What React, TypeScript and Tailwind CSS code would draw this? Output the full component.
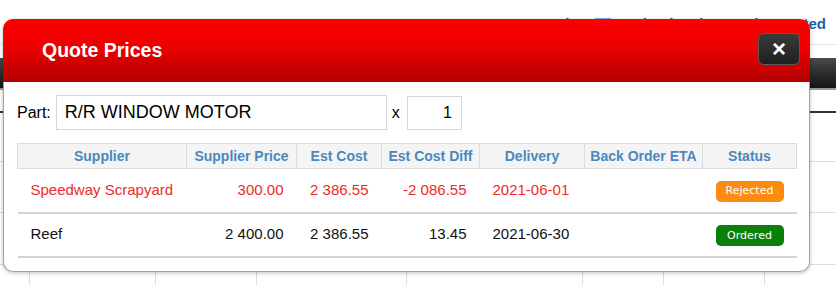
import React from 'react';

type Row = {
  supplier: string;
  price: string;
  est: string;
  diff: string;
  delivery: string;
  eta: string;
  status: 'Rejected' | 'Ordered';
};

const rows: Row[] = [
  {
    supplier: 'Speedway Scrapyard',
    price: '300.00',
    est: '2 386.55',
    diff: '-2 086.55',
    delivery: '2021-06-01',
    eta: '',
    status: 'Rejected',
  },
  {
    supplier: 'Reef',
    price: '2 400.00',
    est: '2 386.55',
    diff: '13.45',
    delivery: '2021-06-30',
    eta: '',
    status: 'Ordered',
  },
];

const headers = [
  { label: 'Supplier', w: 'w-[169px]' },
  { label: 'Supplier Price', w: 'w-[110px]' },
  { label: 'Est Cost', w: 'w-[85px]' },
  { label: 'Est Cost Diff', w: 'w-[98px]' },
  { label: 'Delivery', w: 'w-[105px]' },
  { label: 'Back Order ETA', w: 'w-[118px]' },
  { label: 'Status', w: 'w-[94px]' },
];

function StatusBadge({ status }: { status: Row['status'] }) {
  const color = status === 'Rejected' ? 'bg-[#fb8c0f]' : 'bg-[#0a800a]';
  return (
    <span
      className={`inline-flex h-[21px] w-[68px] items-center justify-center rounded-[5px] text-[11px] text-white ${color}`}
      style={{ fontFamily: '"DejaVu Sans", Verdana, sans-serif' }}
    >
      {status}
    </span>
  );
}

// page that sits behind the modal, mostly hidden
function BackgroundPage() {
  return (
    <div className="flex h-full w-full flex-col">
      <div className="h-[14px]" />
      <div className="flex h-[20px] items-center justify-end gap-3 pr-[10px] text-[15px] font-bold text-[#1f5fa6]">
        <span>Manage quotes</span>
        <span>the</span>
        <span className="h-[12px] w-[16px] bg-[#7db5e8]" />
        <span>Upload a photo to be quoted</span>
      </div>
      <div className="mt-[10px] h-px w-full bg-[#dfe6ee]" />
      <div className="mt-[13px] h-[30px] w-full bg-gradient-to-b from-[#4a4a4a] to-[#151515]" />
      <div className="h-[2px] w-full bg-[#9a9a9a]" />
      <div className="mt-[21px] h-[2px] w-full bg-[#333]" />
      <div className="mt-[48px] h-px w-full bg-[#dcdcdc]" />
      <div className="mt-[50px] h-px w-full bg-[#dcdcdc]" />
      <div className="mt-[51px] h-px w-full bg-[#dcdcdc]" />
      <div className="flex h-[20px] w-full">
        <div className="w-[30px] border-r border-[#dcdcdc]" />
        <div className="w-[126px] border-r border-[#dcdcdc]" />
        <div className="w-[101px] border-r border-[#dcdcdc]" />
        <div className="w-[150px] border-r border-[#dcdcdc]" />
        <div className="w-[176px] border-r border-[#dcdcdc]" />
        <div className="w-[81px] border-r border-[#dcdcdc]" />
        <div className="w-[101px] border-r border-[#dcdcdc]" />
      </div>
    </div>
  );
}

export default function App() {
  return (
    <div
      className="relative h-[302px] w-[836px] overflow-hidden bg-white"
      style={{ fontFamily: '"Liberation Sans", Arial, sans-serif' }}
    >
      <BackgroundPage />

      <div className="absolute left-[3px] top-[19px] w-[807px] rounded-[10px] shadow-[0_1px_4px_rgba(0,0,0,0.25)]">
        <div className="flex h-[63px] items-center justify-between rounded-t-[10px] bg-gradient-to-b from-[#ff0000] via-[#e80000] to-[#b20000] pl-[39px] pr-[10px]">
          <h2 className="text-[19.5px] font-bold text-white">Quote Prices</h2>
          <button className="mb-[4px] flex h-[32px] w-[42px] items-center justify-center rounded-[6px] border border-[#5a5a5a] bg-gradient-to-b from-[#3a3a3a] to-[#1f1f1f] text-[24px] font-bold leading-none text-white">
            ×
          </button>
        </div>

        <div className="rounded-b-[10px] border border-t-0 border-[#a0a0a0] bg-white px-[13px] pb-[13px] pt-[13px]">
          <div className="flex items-center">
            <label className="text-[16px] text-black">Part:</label>
            <input
              className="ml-[5px] h-[35px] w-[331px] border border-[#d6d6d6] px-[8px] text-[18px] text-black outline-none"
              defaultValue="R/R WINDOW MOTOR"
            />
            <span className="ml-[5px] text-[16px] text-black">x</span>
            <input
              className="ml-[7px] h-[34px] w-[55px] border border-[#d6d6d6] px-[9px] text-right text-[16px] text-black outline-none"
              defaultValue="1"
            />
          </div>

          <table className="mt-[13px] w-[779px] table-fixed border-collapse">
            <thead>
              <tr className="h-[25px] bg-[#f4f4f4]">
                {headers.map((h) => (
                  <th
                    key={h.label}
                    className={`${h.w} border border-[#dcdcdc] p-0 text-center text-[14px] font-bold text-[#4a88bf]`}
                  >
                    {h.label}
                  </th>
                ))}
              </tr>
            </thead>
            <tbody>
              {rows.map((r) => {
                const tone = r.status === 'Rejected' ? 'text-[#ee2a2a]' : 'text-[#111]';
                return (
                  <tr key={r.supplier} className={`h-[44px] border-b-2 border-[#d4d4d4] text-[15px] ${tone}`}>
                    <td className="pl-[13px] text-left">{r.supplier}</td>
                    <td className="pr-[13px] text-right">{r.price}</td>
                    <td className="pr-[13px] text-right">{r.est}</td>
                    <td className="pr-[13px] text-right">{r.diff}</td>
                    <td className="pl-[13px] text-left">{r.delivery}</td>
                    <td className="text-center">{r.eta}</td>
                    <td className="text-center">
                      <StatusBadge status={r.status} />
                    </td>
                  </tr>
                );
              })}
            </tbody>
          </table>
        </div>
      </div>
    </div>
  );
}
